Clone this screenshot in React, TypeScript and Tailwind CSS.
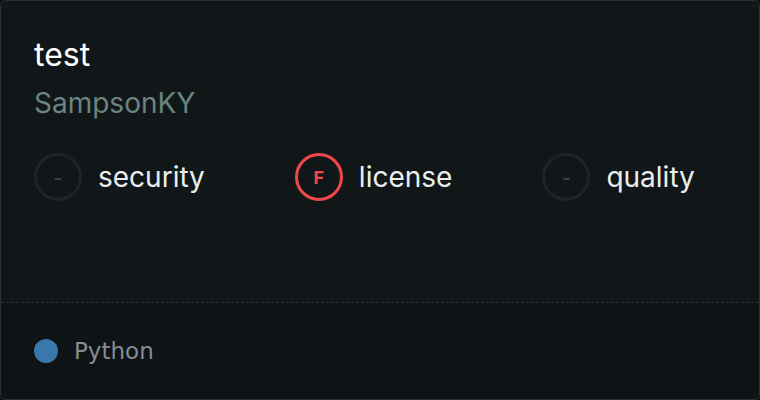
import React from 'react';

type Score = { label: string; grade: string; active?: boolean };

const scores: Score[] = [
  { label: 'security', grade: '-' },
  { label: 'license', grade: 'F', active: true },
  { label: 'quality', grade: '-' },
];

export default function App() {
  return (
    <div className="w-[760px] h-[400px] bg-[#0b0f11]">
      <div
        className="w-full h-full flex flex-col rounded-md border border-[#2a3033] bg-[#111719] overflow-hidden"
        style={{ fontFamily: 'Inter, "Noto Sans", sans-serif' }}
      >
        <div className="flex-1 px-[33px] pt-[34px]">
          <div className="text-[32px] leading-[40px] text-white">test</div>
          <div className="mt-[10px] text-[28px] leading-[36px] text-[#6a847f]">SampsonKY</div>

          <div className="mt-[32px] flex items-center gap-[90px]">
            {scores.map((s) => (
              <div key={s.label} className="flex items-center gap-[16px]">
                <div
                  className={`w-[48px] h-[48px] rounded-full border-[3px] flex items-center justify-center text-[18px] font-bold ${
                    s.active ? 'border-[#f04848] text-[#f04848]' : 'border-[#1f2527] text-[#3a4042]'
                  }`}
                >
                  {s.grade}
                </div>
                <span className="text-[28px] leading-[36px] text-[#eceeee]">{s.label}</span>
              </div>
            ))}
          </div>
        </div>

        <div className="h-[97px] border-t border-dashed border-[#2a3033] bg-[#0e1316] px-[33px] flex items-center">
          <div className="flex items-center gap-[16px]">
            <span className="w-[24px] h-[24px] rounded-full bg-[#3a77ab]" />
            <span
              className="text-[23px] leading-[28px] text-[#878c8f]"
              style={{ fontFamily: '"DejaVu Sans", sans-serif' }}
            >
              Python
            </span>
          </div>
        </div>
      </div>
    </div>
  );
}
